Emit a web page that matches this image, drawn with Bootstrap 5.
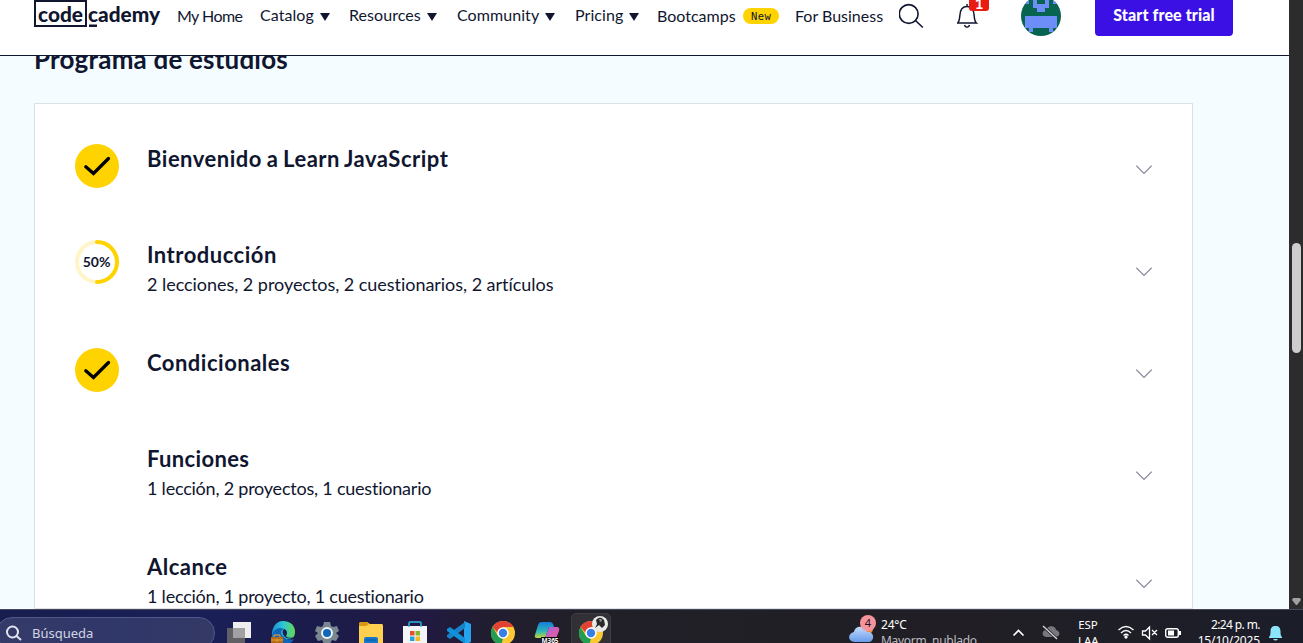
<!DOCTYPE html>
<html lang="es">
<head>
<meta charset="utf-8">
<meta name="viewport" content="width=device-width, initial-scale=1">
<title>Learn JavaScript | Codecademy</title>
<link href="https://cdn.jsdelivr.net/npm/bootstrap@5.3.0/dist/css/bootstrap.min.css" rel="stylesheet">
<style>
  body { height: 643px; font-family: Lato, "Open Sans", sans-serif; font-variant-ligatures: none; color: #10162f; background: #f5fcff; }
  .topbar { height: 56px; border-bottom: 1px solid #10162f; background: #fff; z-index: 2; padding-left: 34px; flex: none; }
  .topbar-row { display: grid; grid-template-columns: 143px 83px 89px 108px 118px 82px 138px 104px 58px 64px 74px 138px; height: 36px; font-size: 16px; line-height: 31px; white-space: nowrap; }
  .topbar-row a { color: #10162f; text-decoration: none; }
  .topbar-row .drop { margin-top: -1px; line-height: 32px; letter-spacing: .07px; }
  .caret { width: 10px; height: 8px; margin-left: 2px; }
  .brand { width: 128px; height: 32px; overflow: visible; }
  .brand text { font: 900 21.5px Lato, sans-serif; fill: #10162f; }
  .new-pill { background: #ffd300; font: 10.5px/16px "DejaVu Sans Mono", monospace; letter-spacing: .4px; width: 36px; height: 16px; border-radius: 8px; margin: 8px 0 0 7.5px; }
  .bell-count { left: 12px; top: -11px; width: 20px; height: 22px; border-radius: 3px; background: #e91c11; color: #fff; font-weight: 700; font-size: 15px; line-height: 28px; }
  .trial { width: 138px; height: 40px; margin-top: -4px; background: #3a10e5; color: #fff; border-radius: 4px; font-weight: 900; font-size: 16px; line-height: 38px; letter-spacing: .12px; padding: 0 0 2px; border: 0; }
  .syllabus-title { font-size: 26px; line-height: 32px; font-weight: 700; letter-spacing: .19px; margin: -13px 0 0 34px; height: 60px; flex: none; }
  .syllabus { width: 1159px; margin-left: 34px; border: 1px solid #dcdfe3; background: #fff; padding: 18px 40px 0; }
  .unit { height: 96px; }
  .unit.tall { height: 108px; }
  .unit-state { width: 72px; padding-top: 22px; }
  .unit-state text { font: 700 14px Lato, sans-serif; fill: #10162f; }
  .unit-name { font-size: 22px; line-height: 30px; font-weight: 700; letter-spacing: .5px; word-spacing: -1.1px; margin: 22px 0 0; }
  .unit-info { font-size: 18px; line-height: 26px; margin-top: 1px; letter-spacing: -.04px; }
  .unit-info.tight { letter-spacing: -.22px; }
  .track { width: 14px; background: #2c2c2c; }
  .thumb { width: 9px; height: 110px; background: #cdcdcd; border-radius: 5px; margin: 243px 0 0 3px; }
  .taskbar { height: 34px; flex: none; color: #fff; font: 12px/16px "Noto Sans", sans-serif; background: linear-gradient(90deg,#191e50 0,#1a1f56 17%,#1b1c4c 23%,#211943 32%,#211d31 37%,#211f27 45%,#211f25 75%,#1b1d29 100%); border-top: 1px solid #46475a; white-space: nowrap; }
  .finder { width: 219px; height: 32px; margin: 7px 0 0 -4px; border: 1px solid #50598a; border-radius: 16px; background: linear-gradient(90deg,#343b69,#303769 60%,#343965); font-size: 13px; line-height: 30px; color: #d3d5e2; padding-left: 8px; flex: none; }
  .apps { margin-left: 12px; }
  .app { width: 44px; height: 33px; padding-top: 11px; flex: none; }
  .app svg { width: 24px; height: 24px; display: block; overflow: visible; }
  .app.current { background: #303035; border: 1px solid #3d3c42; border-radius: 5px 5px 0 0; width: 40px; height: 31px; margin: 3px 0 0 -8px; padding: 7px 0 0 7px; }
  .tray { margin-left: auto; }
  .tray > * { flex: none; }
  .stacked { padding-top: 7px; line-height: 16px; }
</style>
</head>
<body class="d-flex flex-column overflow-hidden">
<div class="d-flex flex-grow-1 overflow-hidden" style="min-height:0">
  <div class="flex-grow-1 d-flex flex-column overflow-hidden">
    <header class="topbar position-relative">
      <nav class="topbar-row">
        <a href="#"><svg class="brand d-block" viewBox="0 0 128 32" aria-label="codecademy">
          <path d="M0 0h53v27H0zM2 2v23h49V2z" fill="#10162f" fill-rule="evenodd"/>
          <text x="4" y="21.500" textLength="45" lengthAdjust="spacingAndGlyphs">code</text>
          <text x="54" y="21.500" textLength="72" lengthAdjust="spacingAndGlyphs">cademy</text>
          <path d="M55 24.500h8v2.500h-8z" fill="#10162f"/>
        </svg></a>
        <a href="#" style="letter-spacing:-.55px">My Home</a>
        <a href="#" class="drop">Catalog <svg class="caret" viewBox="0 0 10 8"><path d="M0 0h10L5 8z" fill="#10162f"/></svg></a>
        <a href="#" class="drop">Resources <svg class="caret" viewBox="0 0 10 8"><path d="M0 0h10L5 8z" fill="#10162f"/></svg></a>
        <a href="#" class="drop">Community <svg class="caret" viewBox="0 0 10 8"><path d="M0 0h10L5 8z" fill="#10162f"/></svg></a>
        <a href="#" class="drop">Pricing <svg class="caret" style="margin-left:1px" viewBox="0 0 10 8"><path d="M0 0h10L5 8z" fill="#10162f"/></svg></a>
        <a href="#" class="d-flex">Bootcamps<span class="new-pill text-center">New</span></a>
        <a href="#">For Business</a>
        <a href="#" aria-label="Buscar"><svg class="d-block" width="28" height="32" fill="none" stroke="#10162f" stroke-width="1.6"><circle cx="9.700" cy="14" r="9.400"/><path d="m16.500 20.500 7.300 7"/></svg></a>
        <a href="#" class="position-relative" aria-label="Notificaciones"><svg class="d-block" width="24" height="32" fill="none" stroke="#10162f" stroke-width="1.5"><path d="M.6 23h18.800c-1.500-1.400-2-3.400-2.200-7.200-.3-6-2.600-9.200-7.200-9.200s-6.900 3.200-7.200 9.200C2.600 19.600 2.100 21.600.6 23zM10 4v2.500M7.500 25c.4 1.500 1.300 2.200 2.500 2.200s2.100-.7 2.500-2.200"/></svg><span class="bell-count position-absolute text-center">1</span></a>
        <a href="#" aria-label="Perfil"><svg class="d-block" width="40" height="36" viewBox="0 0 40 36" shape-rendering="auto"><defs><clipPath id="face"><circle cx="20" cy="16" r="20"/></clipPath></defs><g clip-path="url(#face)"><path d="M0-4h40v40H0z" fill="#066450"/><path d="M4 0h4v4H4zM32 0h4v4h-4zM12 0h4v4h8V0h4v8h-4v4h-8V8h-4zM4 16h32v12h-4v4h-4v-4H12v4H8v-4H4z" fill="#6d8df8"/></g></svg></a>
        <button class="trial btn">Start free trial</button>
      </nav>
    </header>
    <h2 class="syllabus-title">Programa de estudios</h2>
    <main class="syllabus flex-grow-1 overflow-hidden">
      <section class="unit d-flex">
        <div class="unit-state"><svg class="d-block" width="44" height="44"><circle cx="22" cy="22" r="22" fill="#ffd300"/><path d="m10.800 22.800 7.700 6.700L33.500 14.500" fill="none" stroke="#000" stroke-width="3.300" stroke-linecap="round"/></svg></div>
        <h3 class="unit-name flex-grow-1">Bienvenido a Learn JavaScript</h3>
        <svg class="align-self-center" width="16" height="10" fill="none" stroke="#858798" stroke-width="1.200"><path d="M.3 .7 8 8.400 15.700 .7"/></svg>
      </section>
      <section class="unit tall d-flex">
        <div class="unit-state"><svg class="d-block" width="44" height="44" fill="none" stroke-width="4"><circle cx="22" cy="22" r="20" stroke="#fff5c7"/><path d="M22 2a20 20 0 0 1 0 40" stroke="#ffd300" stroke-linecap="round"/><text x="21.500" y="27" text-anchor="middle" stroke="none">50%</text></svg></div>
        <div class="flex-grow-1"><h3 class="unit-name">Introducción</h3><div class="unit-info">2 lecciones, 2 proyectos, 2 cuestionarios, 2 artículos</div></div>
        <svg class="align-self-center" width="16" height="10" fill="none" stroke="#858798" stroke-width="1.200"><path d="M.3 .7 8 8.400 15.700 .7"/></svg>
      </section>
      <section class="unit d-flex">
        <div class="unit-state"><svg class="d-block" width="44" height="44"><circle cx="22" cy="22" r="22" fill="#ffd300"/><path d="m10.800 22.800 7.700 6.700L33.500 14.500" fill="none" stroke="#000" stroke-width="3.300" stroke-linecap="round"/></svg></div>
        <h3 class="unit-name flex-grow-1">Condicionales</h3>
        <svg class="align-self-center" width="16" height="10" fill="none" stroke="#858798" stroke-width="1.200"><path d="M.3 .7 8 8.400 15.700 .7"/></svg>
      </section>
      <section class="unit tall d-flex">
        <div class="unit-state"></div>
        <div class="flex-grow-1"><h3 class="unit-name" style="letter-spacing:.35px">Funciones</h3><div class="unit-info tight">1 lección, 2 proyectos, 1 cuestionario</div></div>
        <svg class="align-self-center" width="16" height="10" fill="none" stroke="#858798" stroke-width="1.200"><path d="M.3 .7 8 8.400 15.700 .7"/></svg>
      </section>
      <section class="unit tall d-flex">
        <div class="unit-state"></div>
        <div class="flex-grow-1"><h3 class="unit-name">Alcance</h3><div class="unit-info tight">1 lección, 1 proyecto, 1 cuestionario</div></div>
        <svg class="align-self-center" width="16" height="10" fill="none" stroke="#858798" stroke-width="1.200"><path d="M.3 .7 8 8.400 15.700 .7"/></svg>
      </section>
    </main>
  </div>
  <div class="track d-flex flex-column flex-shrink-0"><div class="thumb"></div><svg class="mt-auto" width="14" height="12"><path d="M4 1h7l1 2-4 5H7L3 3z" fill="#a0a0a0"/></svg></div>
</div>
<footer class="taskbar d-flex overflow-hidden">
  <div class="finder d-flex"><svg width="18" height="30" fill="none" stroke="#e4e5ee" stroke-width="2"><circle cx="7.500" cy="14" r="5.500"/><path d="m11.500 18 4.500 4"/></svg><span style="margin-left:9px">Búsqueda</span></div>
  <div class="apps d-flex">
    <div class="app"><svg viewBox="0 0 24 24"><path d="M6 1h18v16H6z" fill="#eeeeef"/><path d="M0 7h18v16H0z" fill="#606065"/><path d="M6 7h12v10H6z" fill="#a1a1a4"/></svg></div>
    <div class="app"><svg viewBox="0 0 24 24"><defs><linearGradient id="sea"><stop stop-color="#1593d8"/><stop offset=".5" stop-color="#2fc6d4"/><stop offset="1" stop-color="#66d94d"/></linearGradient></defs><path d="M1 17C0 8 4 0 12 0s12 5 12 11c0 5-3 7-8 7H8z" fill="url(#sea)"/><path d="M1 17C1 8 8 5 13 8c-3 1-4 4-1 7 3 4 8 4 11 3-2 4-6 6-11 6S2 21 1 17z" fill="#1266ba"/><path d="M13 8c3 1 4 4 2 7 1 2 5 2 7 1-2 2-7 2-9-1s-2-5 0-7z" fill="#1b2050"/><path d="M0 16h12v8H0z" fill="#b56a18"/><path d="M3 16v-2h6v2M0 19h12M6 18v3" fill="none" stroke="#efa32e"/></svg></div>
    <div class="app"><svg viewBox="0 0 24 24"><path d="M9 1h6l1 4 2 1 4-1 2 5-3 2 3 3-3 5-4-1-2 4H9l-2-4-4 1-3-5 3-3-3-2 2-5 4 1 2-1z" fill="#798791"/><circle cx="12" cy="12" r="5" fill="#1266b8" stroke="#edf2f6" stroke-width="2"/></svg></div>
    <div class="app"><svg viewBox="0 0 24 24"><path d="M0 4q0-3 2-3h6l3 2h12q1 0 1 2v19H0z" fill="#ffd04f"/><path d="M0 5V3q0-2 2-2h6l2 2-3 2z" fill="#d99812"/><path d="M5 24v-6q0-2 2-2h10q2 0 2 2v6z" fill="#1577cb"/><path d="M7 19h10" stroke="#0a529a"/></svg></div>
    <div class="app"><svg viewBox="0 0 24 24"><path d="M0 5h24v19H0z" fill="#f4f5f7"/><path d="M6 6V2q0-1 1-1h10q1 0 1 1v4" fill="none" stroke="#2bb5e5" stroke-width="1.500"/><path d="M7 10h4.500v4.500H7z" fill="#e84d2c"/><path d="M12.500 10H17v4.500h-4.500z" fill="#83b72a"/><path d="M7 15.500h4.500V20H7z" fill="#25a2e3"/><path d="M12.500 15.500H17V20h-4.500z" fill="#f8b91f"/></svg></div>
    <div class="app"><svg viewBox="0 0 24 24"><path d="m17 0 7 3v18l-7 3z" fill="#26a3ed"/><path d="M18 1v6L3 18l-3-2v-2z" fill="#1682c8"/><path d="m18 23v-6L3 6 0 8v2z" fill="#118fd8"/></svg></div>
    <div class="app"><svg viewBox="0 0 24 24"><circle cx="12" cy="12" r="12" fill="#fcc934"/><path d="M1.600 6A12 12 0 0 1 22.400 6H12v12z" fill="#e34134"/><path d="M1.600 6 7 15l5 3-2 6A12 12 0 0 1 1.600 6z" fill="#229d51"/><circle cx="12" cy="12" r="5" fill="#397de9" stroke="#fff" stroke-width="1.600"/></svg></div>
    <div class="app"><svg viewBox="0 0 24 24"><defs><linearGradient id="warm" x2="1" y2="1"><stop stop-color="#a861ee"/><stop offset="1" stop-color="#f45b84"/></linearGradient><linearGradient id="cool" x2="0" y2="1"><stop stop-color="#147bdc"/><stop offset=".6" stop-color="#32b9b0"/><stop offset="1" stop-color="#c8d638"/></linearGradient></defs><path d="M14 6h8q3 0 2 4l-4 10H9z" fill="url(#warm)"/><path d="M6 1h9q3 0 4 5h-5l-4 11H2q-3 0-2-3L3 4q1-3 3-3z" fill="url(#cool)"/><path d="M6 16h18v8H6z" fill="#090909"/><text x="6.500" y="22" font-size="6.500" font-weight="700" fill="#fff" textLength="17">M365</text></svg></div>
    <div class="app current"><svg viewBox="0 0 24 24"><circle cx="12" cy="12" r="12" fill="#fcc934"/><path d="M1.600 6A12 12 0 0 1 22.400 6H12v12z" fill="#e34134"/><path d="M1.600 6 7 15l5 3-2 6A12 12 0 0 1 1.600 6z" fill="#229d51"/><circle cx="12" cy="12" r="5" fill="#397de9" stroke="#fff" stroke-width="1.600"/><circle cx="21" cy="3" r="8" fill="#e9e9e8"/><path d="M17-1q4-5 8 0l1 5-3 3-3-3-4 3 2-4z" fill="#29292c"/><path d="M20-2q3-1 3 2l-2 1z" fill="#918e88"/></svg></div>
  </div>
  <div class="tray d-flex">
    <svg width="32" height="33" viewBox="0 0 32 33"><defs><linearGradient id="cloud" x2="0" y2="1"><stop stop-color="#c5dcfa"/><stop offset="1" stop-color="#679bea"/></linearGradient></defs><circle cx="19" cy="19" r="5" fill="#f48a39"/><path d="M5 32c-7-1-6-9 0-10 1-7 11-7 13 0 8-1 8 10 1 10z" fill="url(#cloud)"/><circle cx="19" cy="13" r="8" fill="#f6949e"/><text x="19" y="17" font-size="11" text-anchor="middle" fill="#17151b">4</text></svg>
    <div class="stacked" style="width:131px"><div style="letter-spacing:-.2px">24°C</div><div style="letter-spacing:-.3px;color:#bcbbc0">Mayorm. nublado</div></div>
    <svg width="30" height="33" fill="none" stroke="#fff" stroke-width="1.700"><path d="m1.500 25.500 5-5 5 5"/></svg>
    <svg width="36" height="33"><path d="M4 27c-5-1-4-7 0-7 2-6 10-4 10 0 5 1 4 7 0 7z" fill="#77777c"/><path d="m1 16 15 14" stroke="#222128" stroke-width="3"/><path d="m1 16 14 13" stroke="#ddd" stroke-width="1.200"/></svg>
    <div class="stacked text-center" style="width:20px;font-size:11.500px">ESP<br>LAA</div>
    <svg width="45" height="33" style="margin-left:20px" fill="none" stroke="#fff" stroke-width="1.300"><path d="M.5 20q7.500-7 15 0M3 23q5-5 10 0M5.500 25.500q2.500-2.500 5 0"/><circle cx="8" cy="27" r="1" fill="#fff"/><path d="M24.500 21h3l4-4v12l-4-4h-3zM34 20l5 5M39 20l-5 5"/></svg>
    <svg width="20" height="33" style="margin-left:2px"><rect x=".7" y="18.700" width="12.600" height="8.600" rx="2" fill="none" stroke="#fff" stroke-width="1.400"/><path d="M3 20.500h6v5H3zM14 21h2v4h-2z" fill="#fff"/></svg>
    <div class="stacked text-end" style="width:75px"><div style="letter-spacing:-.6px">2:24 p. m.</div><div style="letter-spacing:-.15px">15/10/2025</div></div>
    <svg width="34" height="33" style="margin-left:9px"><path d="M0 27c1-1 1.500-2 1.500-5.500C1.500 18 3 16 6.500 16s5 2 5 5.500C11.500 25 12 26 13 27v1H0zM4 29h5q-2.500 3-5 0z" fill="#8be5fb"/></svg>
  </div>
</footer>
</body>
</html>
